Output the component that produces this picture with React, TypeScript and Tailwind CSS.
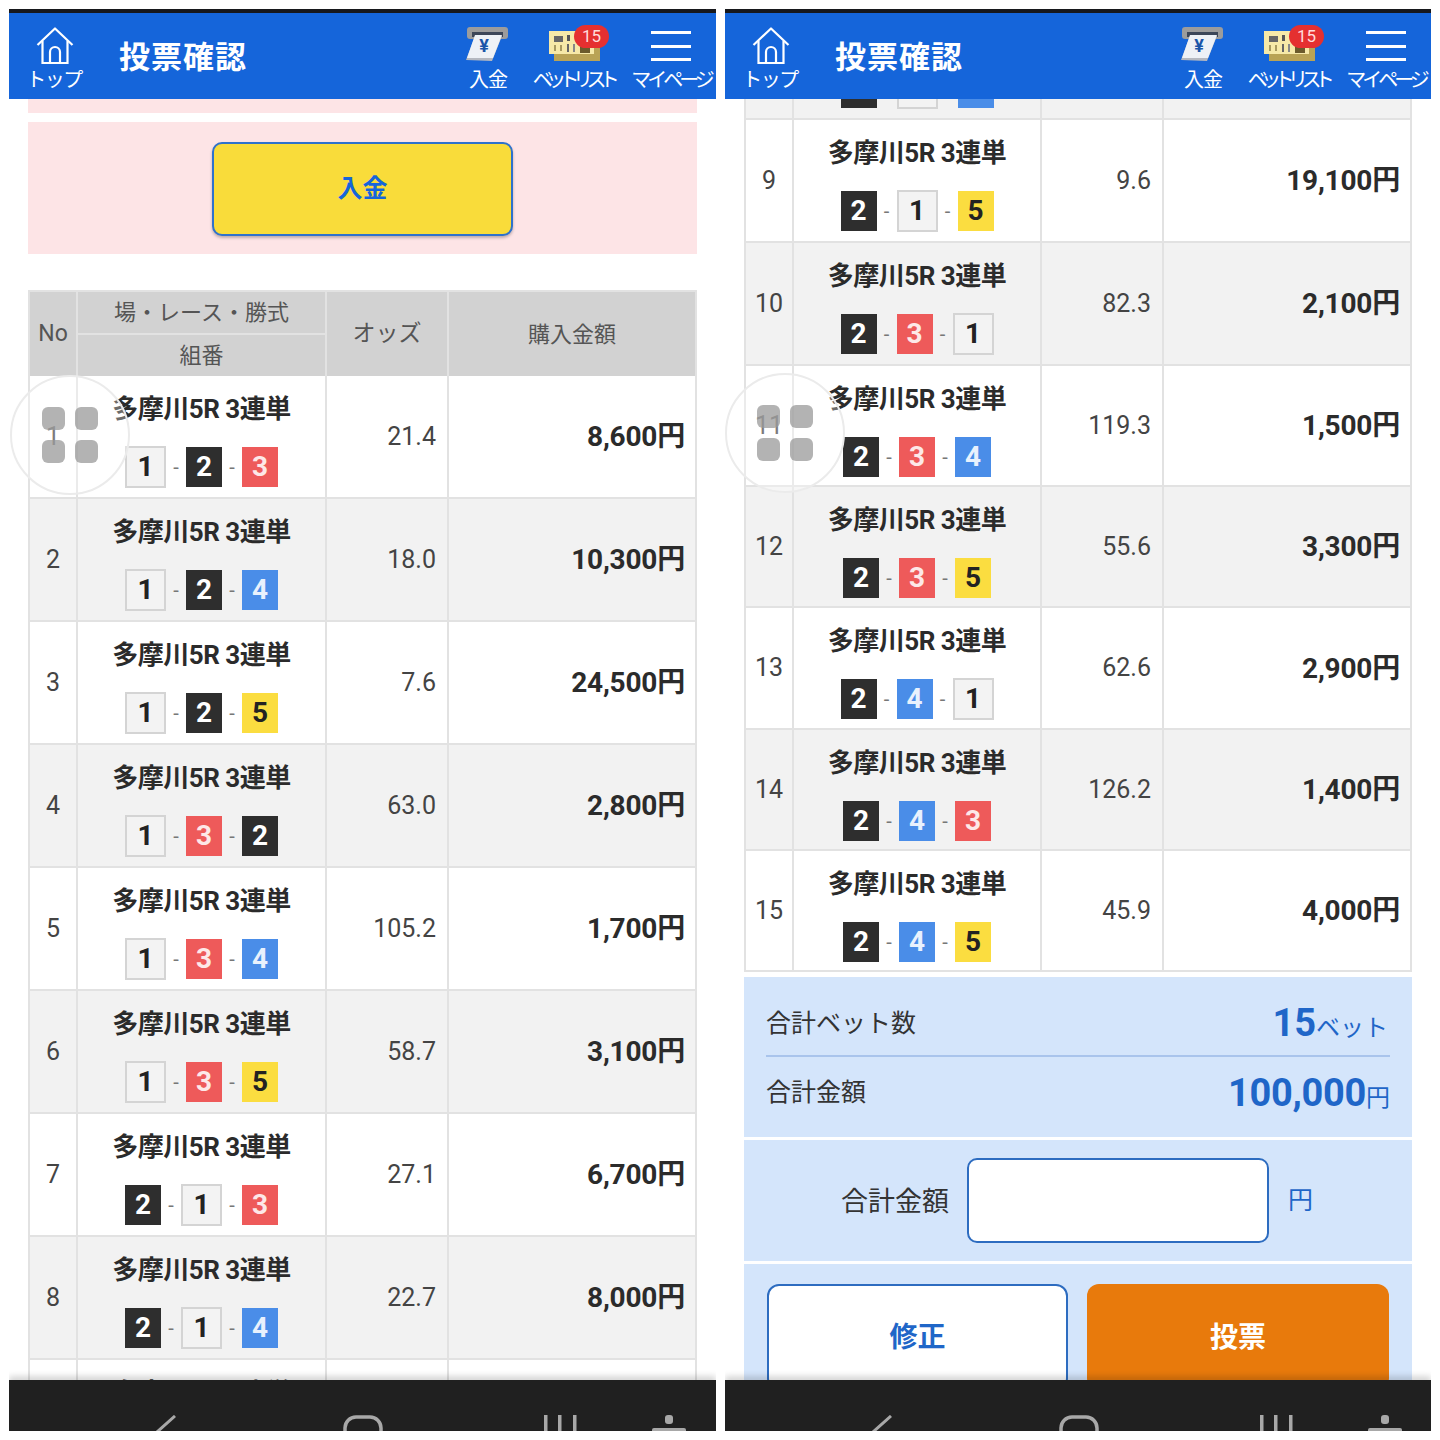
const RACE = '多摩川5R 3連単';

type Row = { no: number; combo: number[]; odds: string; amount: string; height: string };

const leftRows: Row[] = [
  { no: 1, combo: [1, 2, 3], odds: '21.4', amount: '8,600円', height: 'h-[123px]' },
  { no: 2, combo: [1, 2, 4], odds: '18.0', amount: '10,300円', height: 'h-[123px]' },
  { no: 3, combo: [1, 2, 5], odds: '7.6', amount: '24,500円', height: 'h-[123px]' },
  { no: 4, combo: [1, 3, 2], odds: '63.0', amount: '2,800円', height: 'h-[123px]' },
  { no: 5, combo: [1, 3, 4], odds: '105.2', amount: '1,700円', height: 'h-[123px]' },
  { no: 6, combo: [1, 3, 5], odds: '58.7', amount: '3,100円', height: 'h-[123px]' },
  { no: 7, combo: [2, 1, 3], odds: '27.1', amount: '6,700円', height: 'h-[123px]' },
  { no: 8, combo: [2, 1, 4], odds: '22.7', amount: '8,000円', height: 'h-[123px]' },
  { no: 9, combo: [2, 1, 5], odds: '9.6', amount: '19,100円', height: 'h-[123px]' },
];

const rightRows: Row[] = [
  { no: 8, combo: [2, 1, 4], odds: '22.7', amount: '8,000円', height: 'h-[123px]' },
  { no: 9, combo: [2, 1, 5], odds: '9.6', amount: '19,100円', height: 'h-[123px]' },
  { no: 10, combo: [2, 3, 1], odds: '82.3', amount: '2,100円', height: 'h-[123px]' },
  { no: 11, combo: [2, 3, 4], odds: '119.3', amount: '1,500円', height: 'h-[121px]' },
  { no: 12, combo: [2, 3, 5], odds: '55.6', amount: '3,300円', height: 'h-[121px]' },
  { no: 13, combo: [2, 4, 1], odds: '62.6', amount: '2,900円', height: 'h-[122px]' },
  { no: 14, combo: [2, 4, 3], odds: '126.2', amount: '1,400円', height: 'h-[121px]' },
  { no: 15, combo: [2, 4, 5], odds: '45.9', amount: '4,000円', height: 'h-[121px]' },
];

function Badge({ n }: { n: number }) {
  switch (n) {
    case 1:
      return <span className="flex h-[42px] w-[41px] items-center justify-center border-2 border-[#d4d4d4] bg-[#f3f3f3] text-[#222]">1</span>;
    case 2:
      return <span className="flex h-[40px] w-[36px] items-center justify-center bg-[#2e2e2e] text-white">2</span>;
    case 3:
      return <span className="flex h-[40px] w-[36px] items-center justify-center bg-[#ee5a5a] text-[#fde8e8]">3</span>;
    case 4:
      return <span className="flex h-[40px] w-[36px] items-center justify-center bg-[#4a8de8] text-[#e8f1fd]">4</span>;
    default:
      return <span className="flex h-[40px] w-[36px] items-center justify-center bg-[#fbdd40] text-[#222]">5</span>;
  }
}

function TableRow({ row }: { row: Row }) {
  const bg = row.no % 2 === 0 ? 'bg-[#f2f2f2]' : 'bg-white';
  return (
    <div className={`grid grid-cols-[50px_1fr_122px_250px] border-b-2 border-[#e2e2e2] text-[#444] ${bg} ${row.height}`}>
      <div className="flex items-center justify-center border-x-2 border-[#e2e2e2] text-[25px]">{row.no}</div>
      <div className="flex flex-col items-center pt-[15px]">
        <div className="text-[26px] font-bold leading-[36px] tracking-[-0.5px] whitespace-nowrap text-[#2b2b2b]">{RACE}</div>
        <div className="mt-[19px] flex h-[42px] items-center text-[28px] font-bold">
          <Badge n={row.combo[0]} />
          <span className="w-[20px] text-center text-[20px] font-normal text-[#777]">-</span>
          <Badge n={row.combo[1]} />
          <span className="w-[20px] text-center text-[20px] font-normal text-[#777]">-</span>
          <Badge n={row.combo[2]} />
        </div>
      </div>
      <div className="flex items-center justify-end border-l-2 border-[#e2e2e2] pr-[11px] text-[25px]">{row.odds}</div>
      <div className="flex items-center justify-end border-x-2 border-[#e2e2e2] pt-[1px] pr-[10px] text-[28px] font-bold tracking-[-0.2px] text-[#2b2b2b]">
        {row.amount}
      </div>
    </div>
  );
}

function HomeIcon() {
  return (
    <svg width="38" height="38" viewBox="0 0 38 38" fill="none" stroke="white" strokeWidth="2.2">
      <path d="M1.500 18 19 1.500 36.500 18" strokeLinejoin="round" />
      <path d="M6.500 14v22h25V14" />
      <path d="M14 36V25a5 5 0 0 1 10 0v11" />
    </svg>
  );
}

function AtmIcon() {
  return (
    <svg width="46" height="36" viewBox="0 0 46 36">
      <rect x="2" y="0" width="41" height="12" rx="3" fill="#9c9c9c" />
      <rect x="7" y="5" width="31" height="5" fill="#3c4658" />
      <path d="M10 9h27l-10 25-26-1z" fill="#b5b8c0" />
      <path d="M10 8h27l-9 23H2z" fill="#eef1f6" />
      <text x="19" y="25" fontSize="18" fontWeight="700" fill="#1a55a8" textAnchor="middle">¥</text>
    </svg>
  );
}

function BetListIcon() {
  return (
    <div className="relative h-[30px] w-[52px]">
      <svg width="52" height="30" viewBox="0 0 52 30">
        <rect x="5" y="6" width="46" height="24" fill="#b9a355" />
        <rect x="0" y="0" width="45" height="23" fill="#f6e9a8" />
        <rect x="5" y="5" width="9" height="6" fill="#666" />
        <rect x="18" y="4" width="3" height="6" fill="#555" />
        <rect x="5" y="14" width="2" height="6" fill="#a89a60" />
        <rect x="11" y="14" width="2" height="6" fill="#a89a60" />
        <rect x="18" y="13" width="2" height="8" fill="#666" />
        <rect x="24" y="13" width="2" height="8" fill="#888" />
        <rect x="31" y="14" width="10" height="8" fill="#6b5b2c" />
      </svg>
      <span className="absolute top-[-6px] left-[25px] flex h-[23px] w-[35px] items-center justify-center rounded-full bg-[#e53030] text-[17px] text-[#ffdcdc]">
        15
      </span>
    </div>
  );
}

function MenuIcon() {
  return (
    <div className="mr-[4px] flex h-[30px] w-[40px] flex-col justify-between">
      <div className="h-[3px] bg-white" />
      <div className="h-[3px] bg-white" />
      <div className="h-[3px] bg-white" />
    </div>
  );
}

function Header() {
  return (
    <div className="shrink-0">
      <div className="h-[4px] bg-[#17181c]" />
      <div className="flex h-[86px] items-stretch bg-[#1565da] text-white">
        <div className="flex w-[92px] flex-col items-center pt-[14px]">
          <HomeIcon />
          <div className="mt-[2px] pr-[2px] text-[20px] leading-[26px] tracking-[-1.5px] whitespace-nowrap">トップ</div>
        </div>
        <div className="ml-[18px] flex items-center pt-[4px] text-[31px] font-bold tracking-[1px] whitespace-nowrap">投票確認</div>
        <div className="ml-auto flex w-[60px] flex-col items-center pt-[14px]">
          <div className="flex h-[38px] items-start"><AtmIcon /></div>
          <div className="mt-[2px] text-[20px] leading-[26px] tracking-[-1px]">入金</div>
        </div>
        <div className="ml-[13px] flex w-[88px] flex-col items-center pt-[14px]">
          <div className="flex h-[38px] items-center"><BetListIcon /></div>
          <div className="mt-[2px] pr-[4px] text-[20px] leading-[26px] tracking-[-6.6px] whitespace-nowrap">ベットリスト</div>
        </div>
        <div className="ml-[11px] flex w-[86px] flex-col items-center pt-[14px]">
          <div className="flex h-[38px] items-center"><MenuIcon /></div>
          <div className="mt-[2px] pr-[4px] text-[20px] leading-[26px] tracking-[-4px] whitespace-nowrap">マイページ</div>
        </div>
      </div>
    </div>
  );
}

function NavBar() {
  return (
    <div className="relative z-10 flex h-[51px] shrink-0 overflow-hidden bg-[#202020] pt-[35px] pl-[146px] text-[#a8a8a8] shadow-[0_-4px_6px_rgba(0,0,0,0.16)]">
      <svg width="22" height="28" viewBox="0 0 22 28" fill="none" stroke="currentColor" strokeWidth="3">
        <path d="M20 1 2 17l18 16" />
      </svg>
      <svg className="ml-[166px]" width="40" height="28" viewBox="0 0 40 28" fill="none" stroke="currentColor" strokeWidth="3.500">
        <rect x="2" y="2" width="36" height="40" rx="11" />
      </svg>
      <svg className="ml-[160px]" width="34" height="30" viewBox="0 0 34 30" fill="currentColor">
        <rect x="1" y="0" width="3.500" height="30" />
        <rect x="15" y="0" width="3.500" height="30" />
        <rect x="30" y="0" width="3.500" height="30" />
      </svg>
      <svg className="ml-[75px]" width="34" height="30" viewBox="0 0 34 30" fill="currentColor">
        <rect x="13" y="0" width="8" height="9" rx="3" />
        <path d="M0 15a2 2 0 0 1 2-2h30a2 2 0 0 1 2 2v15H0z" />
      </svg>
    </div>
  );
}

function Floater({ className }: { className: string }) {
  return (
    <div className={`absolute z-10 grid h-[120px] w-[120px] grid-cols-[23px_23px] content-center justify-center gap-x-[10px] gap-y-[10px] rounded-full border-2 border-[#ebebeb] bg-white/30 ${className}`}>
      <div className="h-[23px] rounded-[6px] bg-[#9a9a9a]/75" />
      <div className="h-[23px] rounded-[6px] bg-[#9a9a9a]/75" />
      <div className="h-[23px] rounded-[6px] bg-[#9a9a9a]/75" />
      <div className="h-[23px] rounded-[6px] bg-[#9a9a9a]/75" />
    </div>
  );
}

function TableHead() {
  return (
    <div className="grid h-[86px] grid-cols-[46px_1fr_122px_248px] border-2 border-b-0 border-[#e2e2e2] bg-[#d2d2d2] text-[#555]">
      <div className="flex items-center justify-center text-[23px]">No</div>
      <div className="flex flex-col border-l-2 border-[#e2e2e2] text-[22px]">
        <div className="flex h-[43px] items-center justify-center border-b-2 border-[#e2e2e2] whitespace-nowrap">場・レース・勝式</div>
        <div className="flex flex-1 items-center justify-center">組番</div>
      </div>
      <div className="flex items-center justify-center border-l-2 border-[#e2e2e2] text-[23px]">オッズ</div>
      <div className="flex items-center justify-center border-l-2 border-[#e2e2e2] text-[22px]">購入金額</div>
    </div>
  );
}

function LeftPanel() {
  return (
    <div className="relative flex h-[1422px] w-[707px] flex-col overflow-hidden">
      <Header />
      <div className="relative min-h-0 flex-1 overflow-hidden bg-white px-[19px]">
        <div className="h-[14px] bg-[#fde4e6]" />
        <div className="mt-[9px] flex h-[132px] items-center justify-center bg-[#fde4e6] pt-[2px]">
          <div className="flex h-[94px] w-[301px] items-center justify-center rounded-[10px] border-2 border-[#2f72cc] bg-[#f9dc3a] text-[25px] font-bold text-[#1565da] shadow-[0_2px_3px_rgba(0,0,0,0.25)]">
            入金
          </div>
        </div>
        <div className="mt-[36px]">
          <TableHead />
          {leftRows.map((row) => (
            <TableRow key={row.no} row={row} />
          ))}
        </div>
        <Floater className="top-[276px] left-[1px]" />
      </div>
      <NavBar />
    </div>
  );
}

function RightPanel() {
  return (
    <div className="relative flex h-[1422px] w-[706px] flex-col overflow-hidden">
      <Header />
      <div className="relative min-h-0 flex-1 overflow-hidden bg-white px-[19px]">
        <div className="-mt-[102px]">
          {rightRows.map((row) => (
            <TableRow key={row.no} row={row} />
          ))}
        </div>
        <div className="mt-[5px] h-[160px] bg-[#d4e5fb] px-[22px] pt-[23px]">
          <div className="flex h-[57px] items-center justify-between border-b-2 border-[#a9c4ec] pb-[8px]">
            <span className="text-[25px] text-[#333]">合計ベット数</span>
            <span className="flex items-baseline pr-[2px] text-[#1f66c8]">
              <span className="text-[38px] font-bold">15</span>
              <span className="text-[24px]">ベット</span>
            </span>
          </div>
          <div className="flex h-[70px] items-center justify-between pt-[2px]">
            <span className="text-[25px] text-[#333]">合計金額</span>
            <span className="flex items-baseline text-[#1f66c8]">
              <span className="text-[38px] font-bold tracking-[-0.3px]">100,000</span>
              <span className="text-[24px]">円</span>
            </span>
          </div>
        </div>
        <div className="mt-[3px] flex h-[121px] items-center bg-[#d4e5fb] pl-[97px]">
          <span className="w-[126px] pt-[3px] text-[27px] whitespace-nowrap text-[#333]">合計金額</span>
          <div className="h-[85px] w-[302px] rounded-[10px] border-2 border-[#2d6cc0] bg-white" />
          <span className="ml-[19px] text-[25px] text-[#1f66c8]">円</span>
        </div>
        <div className="mt-[3px] flex h-[200px] gap-[19px] bg-[#d4e5fb] px-[23px] pt-[20px]">
          <div className="flex h-[106px] w-[301px] items-center justify-center rounded-[12px] border-2 border-[#2d6cc0] bg-white pt-[2px] text-[28px] font-bold text-[#1f66c8]">
            修正
          </div>
          <div className="flex h-[106px] w-[302px] items-center justify-center rounded-[12px] bg-[#e87a0c] pt-[2px] text-[28px] font-bold text-white">
            投票
          </div>
        </div>
        <Floater className="top-[274px] left-[0px]" />
      </div>
      <NavBar />
    </div>
  );
}

export default function App() {
  return (
    <div className="flex h-[1440px] w-[1440px] gap-[9px] bg-white px-[9px] pt-[9px] font-[Roboto,'Noto_Sans_CJK_JP',sans-serif]">
      <LeftPanel />
      <RightPanel />
    </div>
  );
}
